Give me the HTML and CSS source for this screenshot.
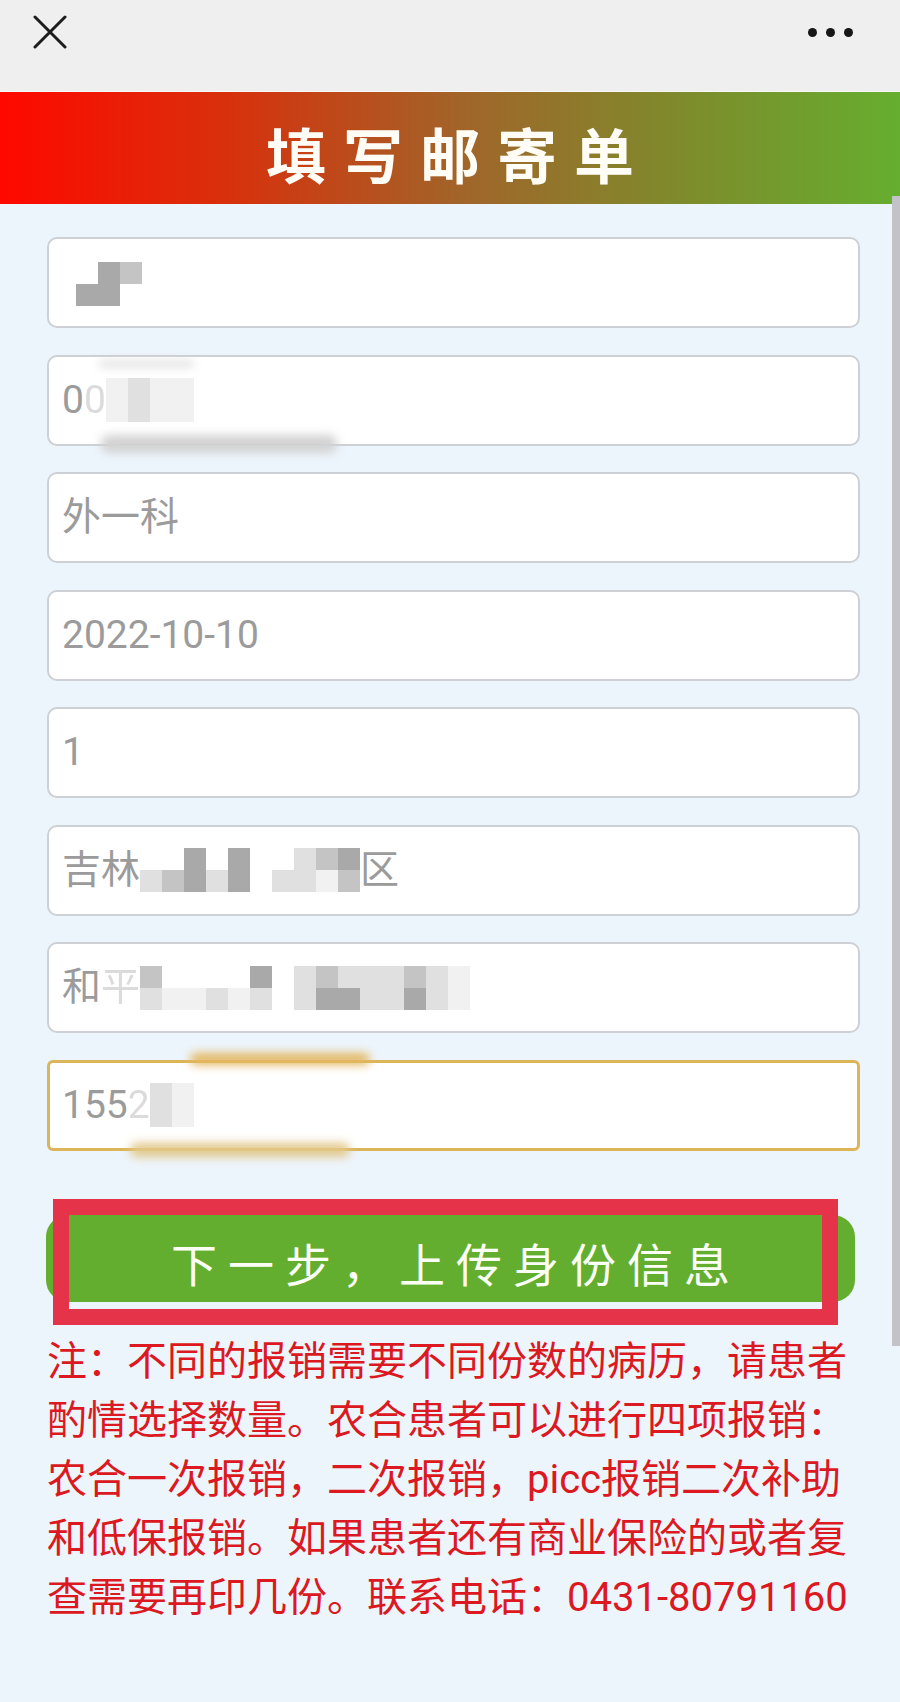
FILE: index.html
```html
<!DOCTYPE html>
<html lang="zh-CN">
<head>
<meta charset="utf-8">
<title>填写邮寄单</title>
<link rel="stylesheet" href="styles.css">
</head>
<body>
<div class="page">
  <div class="topbar">
    <svg class="close" width="34" height="34" viewBox="0 0 34 34"><path d="M2 2 L32 32 M32 2 L2 32" stroke="#1c1c1c" stroke-width="3" stroke-linecap="round" fill="none"/></svg>
    <div class="more"><i></i><i></i><i></i></div>
  </div>
  <div class="header"><h1>填写邮寄单</h1></div>
  <div class="form">
    <div class="field">
      <span class="mosaic cols3 first">
        <b></b><b class="m3"></b><b class="m2"></b>
        <b class="m3"></b><b class="m3"></b><b></b>
      </span>
    </div>
    <div class="field">
      <span class="txt">0<span class="cut">0</span></span>
      <span class="mosaic cols4">
        <b class="m0"></b><b class="m1"></b><b class="m0"></b><b class="m0"></b>
        <b class="m0"></b><b class="m1"></b><b class="m0"></b><b class="m0"></b>
      </span>
      <span class="smudge s1"></span>
      <span class="smudge s2"></span>
    </div>
    <div class="field"><span class="txt">外一科</span></div>
    <div class="field"><span class="txt">2022-10-10</span></div>
    <div class="field"><span class="txt">1</span></div>
    <div class="field">
      <span class="txt">吉林</span>
      <span class="mosaic cols10">
        <b></b><b></b><b class="m3"></b><b></b><b class="m3"></b><b></b><b></b><b class="m1"></b><b class="m2"></b><b class="m3"></b>
        <b class="m1"></b><b class="m2"></b><b class="m3"></b><b class="m1"></b><b class="m3"></b><b></b><b class="m1"></b><b class="m1"></b><b class="m0"></b><b class="m2"></b>
      </span>
      <span class="txt">区</span>
    </div>
    <div class="field">
      <span class="txt">和<span class="cut">平</span></span>
      <span class="mosaic cols15">
        <b class="m2"></b><b></b><b></b><b></b><b></b><b class="m3"></b><b></b><b class="m1"></b><b class="m2"></b><b class="m1"></b><b class="m1"></b><b class="m1"></b><b class="m2"></b><b class="m1"></b><b class="m0"></b>
        <b class="m1"></b><b class="m0"></b><b class="m0"></b><b class="m1"></b><b class="m0"></b><b class="m1"></b><b></b><b class="m1"></b><b class="m3"></b><b class="m3"></b><b class="m1"></b><b class="m1"></b><b class="m3"></b><b class="m1"></b><b class="m0"></b>
      </span>
    </div>
    <div class="field focus">
      <span class="txt">155<span class="cut">2</span></span>
      <span class="mosaic cols2">
        <b class="m1"></b><b class="m0"></b>
        <b class="m1"></b><b class="m0"></b>
      </span>
      <span class="smudge s3"></span>
      <span class="smudge s4"></span>
    </div>
    <div class="btn-wrap">
      <button class="next">下一步，上传身份信息</button>
      <div class="mark"></div>
    </div>
    <p class="note">注：不同的报销需要不同份数的病历，请患者酌情选择数量。农合患者可以进行四项报销：农合一次报销，二次报销，picc报销二次补助和低保报销。如果患者还有商业保险的或者复查需要再印几份。联系电话：0431-80791160</p>
  </div>
  <div class="scrollbar"></div>
</div>
</body>
</html>
```
FILE: styles.css
```css
* { box-sizing: border-box; }
html, body { margin: 0; padding: 0; }
body {
  background: #edf5fc;
  font-family: Roboto, "Noto Sans CJK SC", sans-serif;
}
.page {
  position: relative;
  width: 900px;
  min-height: 1702px;
  background: #edf5fc;
}
.topbar {
  height: 92px;
  background: #efefef;
  border-bottom: 1px solid #f7f7f7;
  display: flex;
  justify-content: space-between;
  align-items: flex-start;
  padding: 15px 47px 0 33px;
}
.close { display: block; }
.more {
  height: 34px;
  display: flex;
  align-items: center;
  gap: 9px;
}
.more i {
  display: block;
  width: 9px;
  height: 9px;
  border-radius: 50%;
  background: #161616;
}
.header {
  height: 112px;
  background: linear-gradient(90deg, #ff0800 0%, #d8300c 25%, #a0662a 52%, #7f8a2c 75%, #66ae2f 100%);
  display: flex;
  align-items: center;
  justify-content: center;
  padding-top: 10px;
}
.header h1 {
  margin: 0;
  color: #fffdf5;
  font-family: "Noto Sans CJK SC", sans-serif;
  font-weight: 700;
  font-size: 60px;
  line-height: 1;
  letter-spacing: 17px;
  padding-left: 17px;
}
.form {
  padding: 33px 40px 0 47px;
}
.field {
  position: relative;
  width: 813px;
  height: 91px;
  margin-bottom: 26.5px;
  background: #fff;
  border: 2px solid #cdd0d4;
  border-radius: 10px;
  display: flex;
  align-items: center;
  padding-left: 13px;
  color: #9b9b9b;
  font-size: 39px;
  overflow: visible;
}
.field:last-of-type { margin-bottom: 0; }
.field.focus {
  border: 3px solid #dcb55a;
  border-radius: 6px;
  padding-left: 12px;
  margin-bottom: 0;
}
.txt { white-space: nowrap; line-height: 1; }
.cut { opacity: 0.35; }
.mosaic {
  display: inline-grid;
  grid-auto-rows: 22px;
}
.mosaic b { display: block; background: transparent; }
.mosaic .m0 { background: #f1f1f1; }
.mosaic .m1 { background: #e0e0e0; }
.mosaic .m2 { background: #c4c4c4; }
.mosaic .m3 { background: #a9a9a9; }
.cols2 { grid-template-columns: repeat(2, 22px); }
.cols3 { grid-template-columns: repeat(3, 22px); }
.cols4 { grid-template-columns: repeat(4, 22px); }
.cols10 { grid-template-columns: repeat(10, 22px); }
.cols15 { grid-template-columns: repeat(15, 22px); }
.mosaic.first { margin-left: 14px; margin-top: 2px; }
.smudge {
  position: absolute;
  border-radius: 8px;
  filter: blur(5px);
}
.s1 { left: 50px; top: 4px; width: 95px; height: 6px; background: #dcdcdc; }
.s2 { left: 52px; top: 78px; width: 236px; height: 18px; background: #d2d2d2; }
.s3 { left: 140px; top: -10px; width: 180px; height: 12px; background: #e3b760; }
.s4 { left: 80px; top: 80px; width: 220px; height: 14px; background: #e2c88a; }
.btn-wrap {
  position: relative;
  margin-top: 64px;
  height: 87px;
}
.next {
  display: block;
  width: 809px;
  height: 87px;
  margin: 0 0 0 -1px;
  border: 0;
  border-radius: 22px;
  background: #64ae2f;
  color: #fbfff5;
  font-family: "Noto Sans CJK SC", sans-serif;
  font-weight: 400;
  font-size: 46px;
  letter-spacing: 11px;
  padding: 8px 0 0 11px;
  line-height: 1;
}
.mark {
  position: absolute;
  left: 6px;
  top: -16px;
  width: 785px;
  height: 126px;
  border: 16px solid #e5344a;
  border-bottom-width: 16px;
}
.note {
  margin: 30px 0 0 0;
  width: 813px;
  color: #dc1820;
  font-size: 40px;
  line-height: 59px;
}
.scrollbar {
  position: absolute;
  right: 0;
  top: 196px;
  width: 8px;
  height: 1150px;
  background: #c2c2c8;
}
```
